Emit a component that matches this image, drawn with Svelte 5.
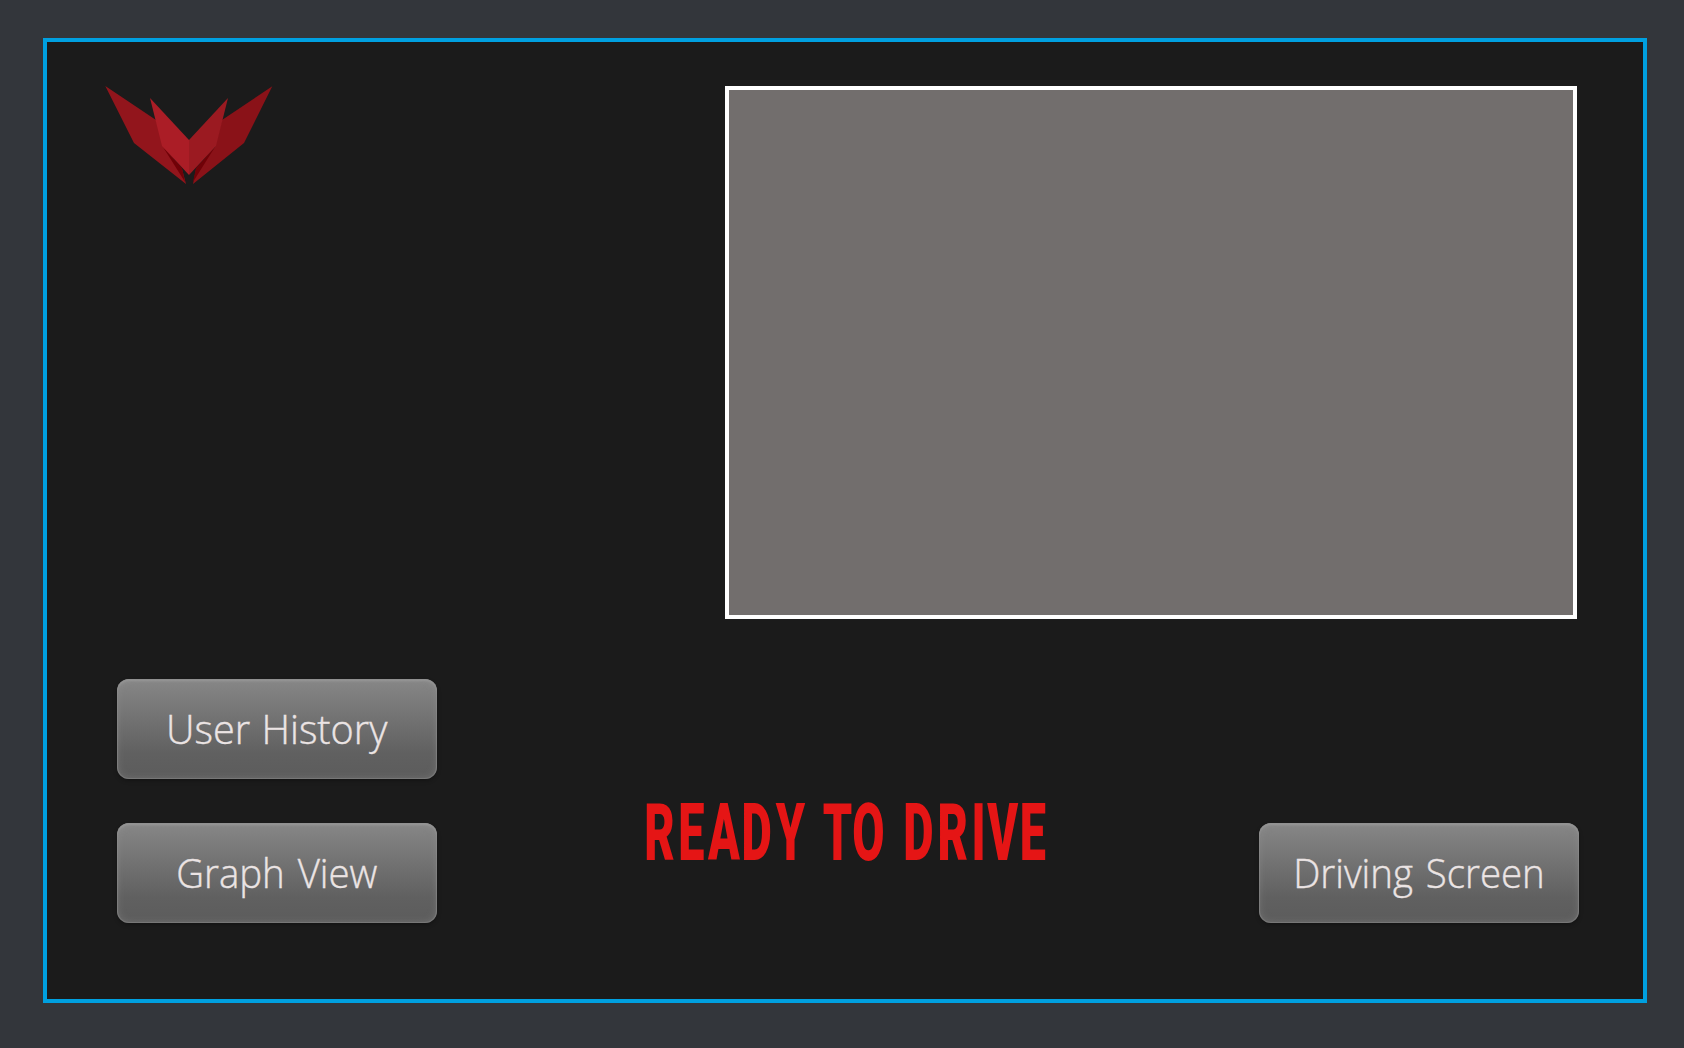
<script>
  // Letters are condensed horizontally, so their positions are divided by the same factor.
  const condense = 0.585;
  const letterX = [-1.8, 32.2, 62, 95.5, 129.8, 160, 176.8, 206.3, 240, 257.2, 291.6, 325.6, 341.2, 373.8]
    .map((x) => (x / condense).toFixed(2))
    .join(' ');
</script>

<main class="screen">
  <header>
    <svg class="logo" viewBox="0 0 168 98" role="img" aria-label="Wings logo">
      <path fill="#92151c" d="M-.7-1 50 33 58 60 76 82 80 97 28 56Z" />
      <path fill="#8a1218" d="M166.3-.8 116 33 109 60 90 82 87 97 138 56Z" />
      <path fill="#700107" d="M57 60 76 81 79 95Z M109 60 90 81 87 95Z" />
      <path fill="#ab1d26" d="M44 11 83 53V88L56 59Z" />
      <path fill="#9b1a21" d="M122 11 83 53V88L110 59Z" />
    </svg>
    <section class="panel" aria-label="Preview"></section>
  </header>
  <footer>
    <nav>
      <button class="history"><span>User History</span></button>
      <button class="graph"><span>Graph View</span></button>
    </nav>
    <svg class="status" viewBox="0 0 400 58">
      <text x={letterX} y="57" transform="scale({condense} 1)">READY TO DRIVE</text>
    </svg>
    <button class="driving"><span>Driving Screen</span></button>
  </footer>
</main>

<style>
  :global(body) {
    background: #33363b;
  }
  .screen {
    box-sizing: border-box;
    width: 1604px;
    height: 965px;
    margin: 38px 0 0 43px;
    padding: 44px 64px 76px 58px;
    border: 4px solid #00a0e0;
    background: #1b1b1b;
    display: flex;
    flex-direction: column;
    justify-content: space-between;
  }
  :global(#app) {
    display: flow-root;
  }
  header {
    display: flex;
    justify-content: space-between;
    align-items: flex-start;
    padding-right: 2px;
  }
  .logo {
    width: 168px;
    height: 98px;
    margin: 1px 0 0 1px;
    overflow: visible;
  }
  .panel {
    box-sizing: border-box;
    width: 852px;
    height: 533px;
    border: 4px solid #fff;
    background: #726e6d;
  }
  footer {
    display: flex;
    align-items: flex-end;
    padding-left: 12px;
  }
  nav {
    display: flex;
    flex-direction: column;
    gap: 44px;
  }
  button {
    box-sizing: border-box;
    width: 320px;
    height: 100px;
    padding: 0;
    border: 0;
    border-radius: 12px;
    background: linear-gradient(#878787, #777 30%, #606060 75%, #5c5c5c);
    box-shadow: inset 0 0 1px 1px #8a8a8a88, inset 0 0 9px #a0a0a055, inset 0 2px 2px #a6a6a688, 0 2px 4px #0004;
    color: #ebe4e4;
    font: 300 40px/1 "Open Sans", sans-serif;
    -webkit-text-stroke: 0.4px #ebe4e4;
    white-space: nowrap;
  }
  button span {
    display: inline-block;
    word-spacing: 3px;
    transform: scaleX(0.96);
  }
  .history span {
    word-spacing: 1px;
    transform: scaleX(0.99);
  }
  .status {
    width: 400px;
    height: 58px;
    margin: 0 213px 62px 209px;
    overflow: visible;
  }
  .status text {
    fill: #e51515;
    font: 900 80px Roboto, sans-serif;
  }
</style>
